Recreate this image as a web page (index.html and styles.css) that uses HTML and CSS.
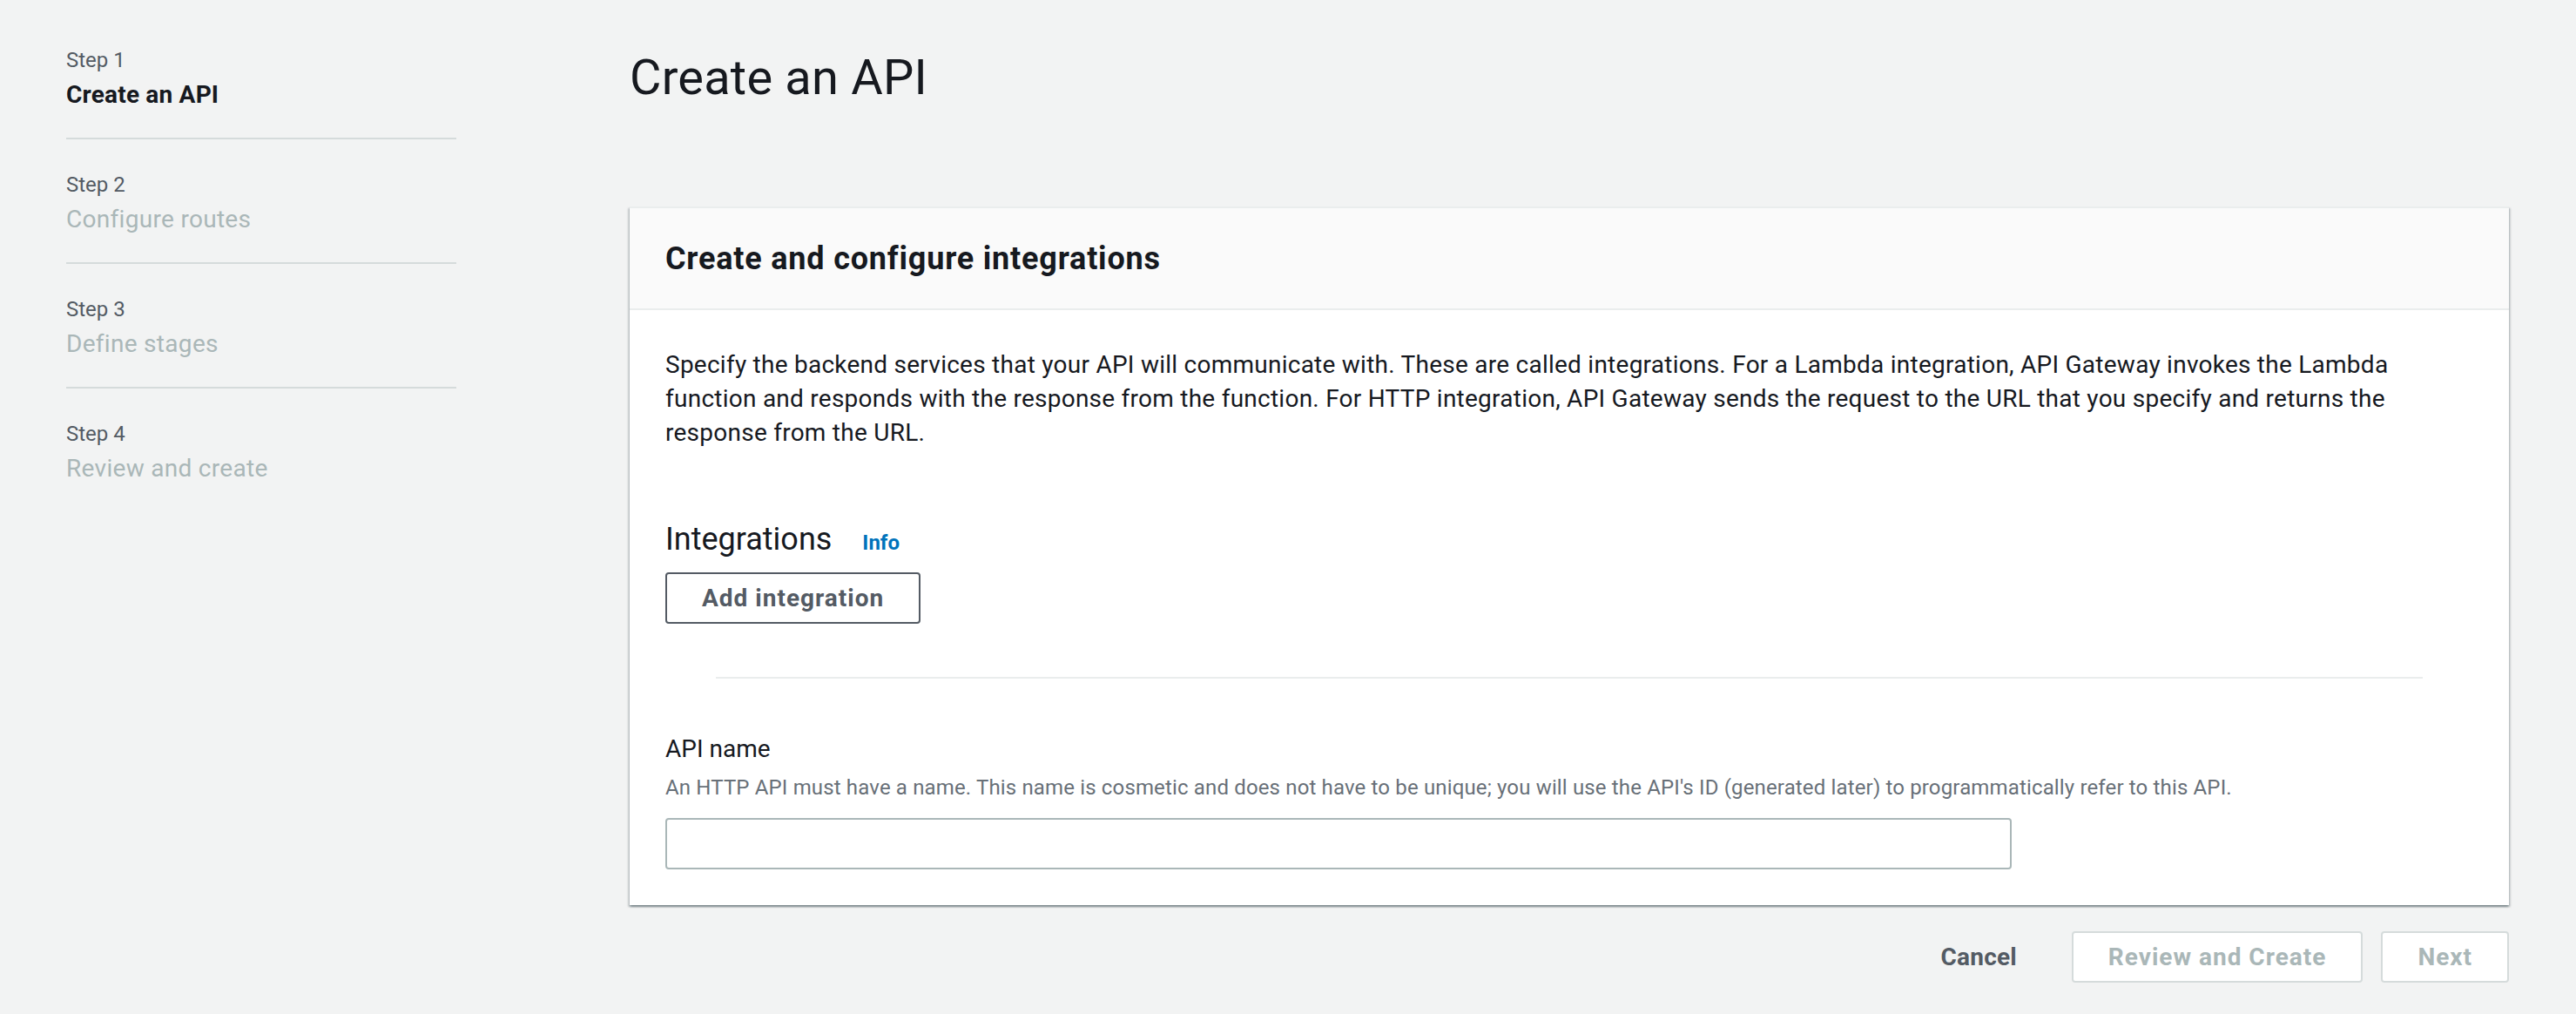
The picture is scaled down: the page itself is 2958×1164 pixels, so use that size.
FILE: index.html
```html
<!DOCTYPE html>
<html lang="en">
<head>
<meta charset="utf-8">
<title>Create an API</title>
<link rel="stylesheet" href="styles.css">
</head>
<body>
<div class="page">
  <nav class="steps">
    <div class="step">
      <div class="step-num">Step 1</div>
      <div class="step-title is-active">Create an API</div>
    </div>
    <div class="step">
      <div class="step-num">Step 2</div>
      <div class="step-title">Configure routes</div>
    </div>
    <div class="step">
      <div class="step-num">Step 3</div>
      <div class="step-title">Define stages</div>
    </div>
    <div class="step">
      <div class="step-num">Step 4</div>
      <div class="step-title">Review and create</div>
    </div>
  </nav>

  <main class="main">
    <h1 class="page-title">Create an API</h1>

    <section class="card">
      <header class="card-header">
        <h2 class="card-title">Create and configure integrations</h2>
      </header>
      <div class="card-body">
        <p class="intro">Specify the backend services that your API will communicate with. These are called integrations. For a Lambda integration, API Gateway invokes the Lambda function and responds with the response from the function. For HTTP integration, API Gateway sends the request to the URL that you specify and returns the response from the URL.</p>

        <div class="section-head">
          <h3 class="section-title">Integrations</h3>
          <a class="info-link" href="#">Info</a>
        </div>
        <div class="section-actions">
          <button class="btn btn-normal" type="button">Add integration</button>
        </div>

        <hr class="divider">

        <div class="field">
          <label class="field-label" for="api-name">API name</label>
          <p class="field-desc">An HTTP API must have a name. This name is cosmetic and does not have to be unique; you will use the API's ID (generated later) to programmatically refer to this API.</p>
          <input class="text-input" id="api-name" type="text">
        </div>
      </div>
    </section>

    <div class="footer-actions">
      <button class="btn btn-link" type="button">Cancel</button>
      <button class="btn btn-disabled" type="button">Review and Create</button>
      <button class="btn btn-disabled" type="button">Next</button>
    </div>
  </main>
</div>
</body>
</html>
```
FILE: styles.css
```css
* { box-sizing: border-box; }

html, body {
  margin: 0;
  padding: 0;
  background: #f2f3f3;
}

body {
  font-family: Roboto, "Liberation Sans", Arial, sans-serif;
  color: #16191f;
  -webkit-font-smoothing: antialiased;
}

.page {
  display: flex;
  align-items: flex-start;
  padding: 0 77px 0 76px;
  min-height: 1164px;
}

/* ---------- left steps ---------- */
.steps {
  flex: 0 0 448px;
  width: 448px;
  padding-top: 17px;
}

.step {
  padding: 36px 0 29px;
  border-bottom: 2px solid #d5dbdb;
}

.step:last-child {
  border-bottom: none;
}

.step-num {
  font-size: 24px;
  line-height: 32px;
  color: #545b64;
}

.step-title {
  margin-top: 4px;
  font-size: 28px;
  line-height: 40px;
  letter-spacing: 0.3px;
  color: #aab7b8;
}

.step-title.is-active {
  font-weight: 700;
  color: #16191f;
  letter-spacing: 0.2px;
}

/* ---------- main ---------- */
.main {
  flex: 1 1 auto;
  min-width: 0;
  margin-left: 199px;
  padding-top: 57px;
}

.page-title {
  margin: 0;
  font-size: 56px;
  line-height: 64px;
  font-weight: 400;
  letter-spacing: 0.2px;
  color: #16191f;
}

.card {
  margin-top: 116px;
  background: #ffffff;
  border-top: 2px solid #eaeded;
  box-shadow: 0 2px 2px 0 rgba(0, 28, 36, 0.3),
              2px 2px 2px 0 rgba(0, 28, 36, 0.15),
              -2px 2px 2px 0 rgba(0, 28, 36, 0.15);
}

.card-header {
  background: #fafafa;
  padding: 34px 41px 33px;
  border-bottom: 2px solid #eaeded;
}

.card-title {
  margin: 0;
  font-size: 36px;
  line-height: 48px;
  font-weight: 700;
  letter-spacing: 0.8px;
  color: #16191f;
}

.card-body {
  padding: 43px 41px 41px;
}

.intro {
  margin: 0;
  font-size: 28px;
  line-height: 39.2px;
  letter-spacing: 0.25px;
  color: #16191f;
}

.section-head {
  display: flex;
  align-items: baseline;
  margin-top: 78px;
}

.section-title {
  margin: 0;
  font-size: 36px;
  line-height: 48px;
  font-weight: 400;
  color: #16191f;
}

.info-link {
  margin-left: 35px;
  font-size: 24px;
  line-height: 32px;
  font-weight: 700;
  color: #0073bb;
  text-decoration: none;
}

.section-actions {
  display: flex;
  margin-top: 14px;
}

/* ---------- buttons ---------- */
.btn {
  font-family: inherit;
  font-size: 28px;
  line-height: 37px;
  font-weight: 700;
  letter-spacing: 1px;
  padding: 9px 40px;
  border: 2px solid transparent;
  border-radius: 4px;
  background: transparent;
  cursor: pointer;
}

.btn-normal {
  background: #ffffff;
  border-color: #545b64;
  color: #545b64;
}

.btn-link {
  color: #545b64;
  letter-spacing: 0.2px;
}

.btn-disabled {
  background: #ffffff;
  border-color: #d5dbdb;
  color: #aab7b8;
  cursor: default;
}

.divider {
  margin: 61px 58px 0;
  border: none;
  height: 2px;
  background: #eaeded;
}

/* ---------- field ---------- */
.field {
  margin-top: 61px;
}

.field-label {
  display: block;
  font-size: 28px;
  line-height: 40px;
  color: #16191f;
}

.field-desc {
  margin: 8px 0 0;
  font-size: 24px;
  line-height: 32px;
  letter-spacing: 0.15px;
  color: #687078;
}

.text-input {
  display: block;
  margin-top: 19px;
  width: 1546px;
  height: 59px;
  padding: 0 20px;
  font-family: inherit;
  font-size: 28px;
  border: 2px solid #aab7b8;
  border-radius: 4px;
  background: #ffffff;
  outline: none;
}

/* ---------- footer ---------- */
.footer-actions {
  display: flex;
  justify-content: flex-end;
  gap: 21px;
  margin-top: 30px;
}
```
